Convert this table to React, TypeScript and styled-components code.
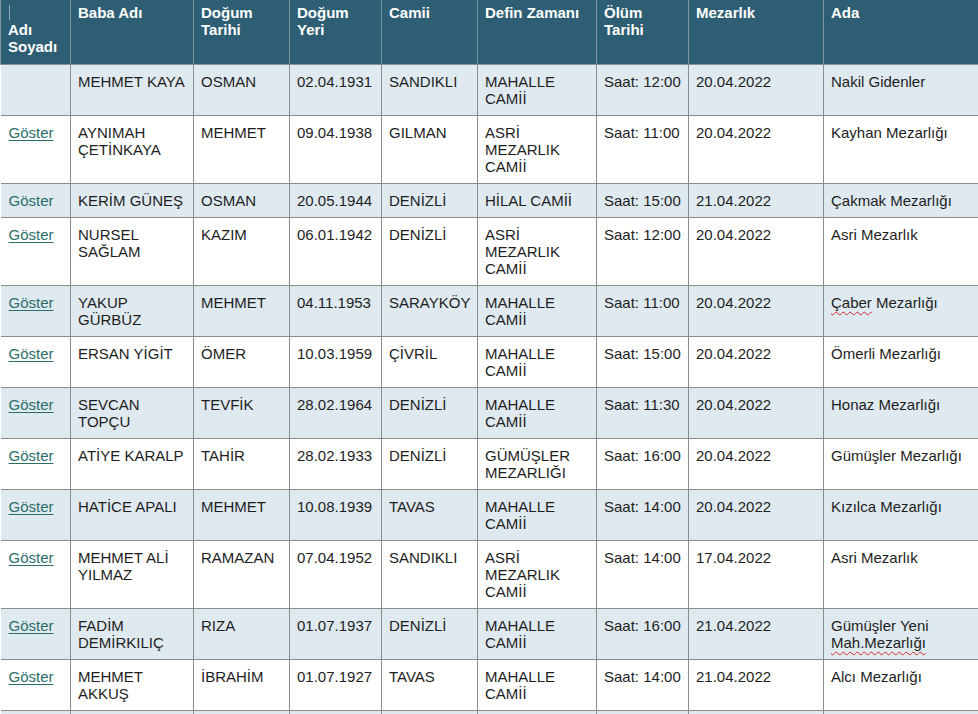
import React from "react";
import styled, { createGlobalStyle } from "styled-components";

const Global = createGlobalStyle`
  html, body { margin: 0; padding: 0; background: #ffffff; overflow: hidden; }
  body { font-family: "Liberation Sans", Arial, sans-serif; }
`;

const Table = styled.table`
  width: 978px;
  border-collapse: collapse;
  table-layout: fixed;
  font-family: "Liberation Sans", Arial, sans-serif;
  font-size: 15px;
  line-height: 17px;
`;

const HeadCell = styled.th`
  background: #2e5e73;
  color: #ffffff;
  font-weight: bold;
  text-align: left;
  vertical-align: top;
  padding: 4px 4px 9px 7px;
  border: 1px solid #7f939d;
  border-top: none;
`;

const Caret = styled.span`
  display: block;
  width: 1px;
  height: 15px;
  margin: 1px 0 1px 1px;
  background: #8fa9b6;
`;

const Row = styled.tr<{ $alt: boolean }>`
  background: ${(p) => (p.$alt ? "#dee9f0" : "#ffffff")};
`;

const Cell = styled.td`
  color: #1e1e1e;
  vertical-align: top;
  height: 17px;
  padding: 8px 4px 8px 7px;
  border: 1px solid #8c8c8c;
  &:first-child { border-left: none; }
`;

const LinkCell = styled(Cell)`
  padding-left: 8px;
`;

const ShowLink = styled.a<{ $plain?: boolean }>`
  color: #2c6d6b;
  text-decoration: ${(p) => (p.$plain ? "none" : "underline")};
  text-underline-offset: 2px;
  cursor: pointer;
`;

const Misspelled = styled.span`
  text-decoration: underline wavy #d42a2a;
  text-decoration-thickness: 1px;
  text-underline-offset: 3px;
`;

const widths = [70, 123, 96, 92, 96, 119, 92, 135, 155];

const headers: React.ReactNode[] = [
  <>
    <Caret />
    Adı Soyadı
  </>,
  "Baba Adı",
  "Doğum Tarihi",
  "Doğum Yeri",
  "Camii",
  "Defin Zamanı",
  "Ölüm Tarihi",
  "Mezarlık",
  "Ada",
];

type R = {
  link: "none" | "u" | "plain";
  cells: React.ReactNode[];
};

const rows: R[] = [
  { link: "none", cells: ["MEHMET KAYA", "OSMAN", "02.04.1931", "SANDIKLI", "MAHALLE CAMİİ", "Saat: 12:00", "20.04.2022", "Nakil Gidenler"] },
  { link: "u", cells: ["AYNIMAH ÇETİNKAYA", "MEHMET", "09.04.1938", "GILMAN", "ASRİ MEZARLIK CAMİİ", "Saat: 11:00", "20.04.2022", "Kayhan Mezarlığı"] },
  { link: "plain", cells: ["KERİM GÜNEŞ", "OSMAN", "20.05.1944", "DENİZLİ", "HİLAL CAMİİ", "Saat: 15:00", "21.04.2022", "Çakmak Mezarlığı"] },
  { link: "u", cells: ["NURSEL SAĞLAM", "KAZIM", "06.01.1942", "DENİZLİ", "ASRİ MEZARLIK CAMİİ", "Saat: 12:00", "20.04.2022", "Asri Mezarlık"] },
  { link: "u", cells: ["YAKUP GÜRBÜZ", "MEHMET", "04.11.1953", "SARAYKÖY", "MAHALLE CAMİİ", "Saat: 11:00", "20.04.2022", <><Misspelled>Çaber</Misspelled> Mezarlığı</>] },
  { link: "u", cells: ["ERSAN YİGİT", "ÖMER", "10.03.1959", "ÇİVRİL", "MAHALLE CAMİİ", "Saat: 15:00", "20.04.2022", "Ömerli Mezarlığı"] },
  { link: "u", cells: ["SEVCAN TOPÇU", "TEVFİK", "28.02.1964", "DENİZLİ", "MAHALLE CAMİİ", "Saat: 11:30", "20.04.2022", "Honaz Mezarlığı"] },
  { link: "u", cells: ["ATİYE KARALP", "TAHİR", "28.02.1933", "DENİZLİ", "GÜMÜŞLER MEZARLIĞI", "Saat: 16:00", "20.04.2022", "Gümüşler Mezarlığı"] },
  { link: "u", cells: ["HATİCE APALI", "MEHMET", "10.08.1939", "TAVAS", "MAHALLE CAMİİ", "Saat: 14:00", "20.04.2022", "Kızılca Mezarlığı"] },
  { link: "u", cells: ["MEHMET ALİ YILMAZ", "RAMAZAN", "07.04.1952", "SANDIKLI", "ASRİ MEZARLIK CAMİİ", "Saat: 14:00", "17.04.2022", "Asri Mezarlık"] },
  { link: "u", cells: ["FADİM DEMİRKILIÇ", "RIZA", "01.07.1937", "DENİZLİ", "MAHALLE CAMİİ", "Saat: 16:00", "21.04.2022", <>Gümüşler Yeni <Misspelled>Mah.Mezarlığı</Misspelled></>] },
  { link: "u", cells: ["MEHMET AKKUŞ", "İBRAHİM", "01.07.1927", "TAVAS", "MAHALLE CAMİİ", "Saat: 14:00", "21.04.2022", "Alcı Mezarlığı"] },
  { link: "none", cells: ["", "", "", "", "", "", "", ""] },
];

export default function App() {
  return (
    <>
      <Global />
      <Table>
        <colgroup>
          {widths.map((w, i) => (
            <col key={i} style={{ width: w }} />
          ))}
        </colgroup>
        <thead>
          <tr>
            {headers.map((h, i) => (
              <HeadCell key={i}>{h}</HeadCell>
            ))}
          </tr>
        </thead>
        <tbody>
          {rows.map((r, i) => (
            <Row key={i} $alt={i % 2 === 0}>
              <LinkCell>
                {r.link !== "none" && <ShowLink $plain={r.link === "plain"}>Göster</ShowLink>}
              </LinkCell>
              {r.cells.map((c, j) => (
                <Cell key={j}>{c}</Cell>
              ))}
            </Row>
          ))}
        </tbody>
      </Table>
    </>
  );
}
